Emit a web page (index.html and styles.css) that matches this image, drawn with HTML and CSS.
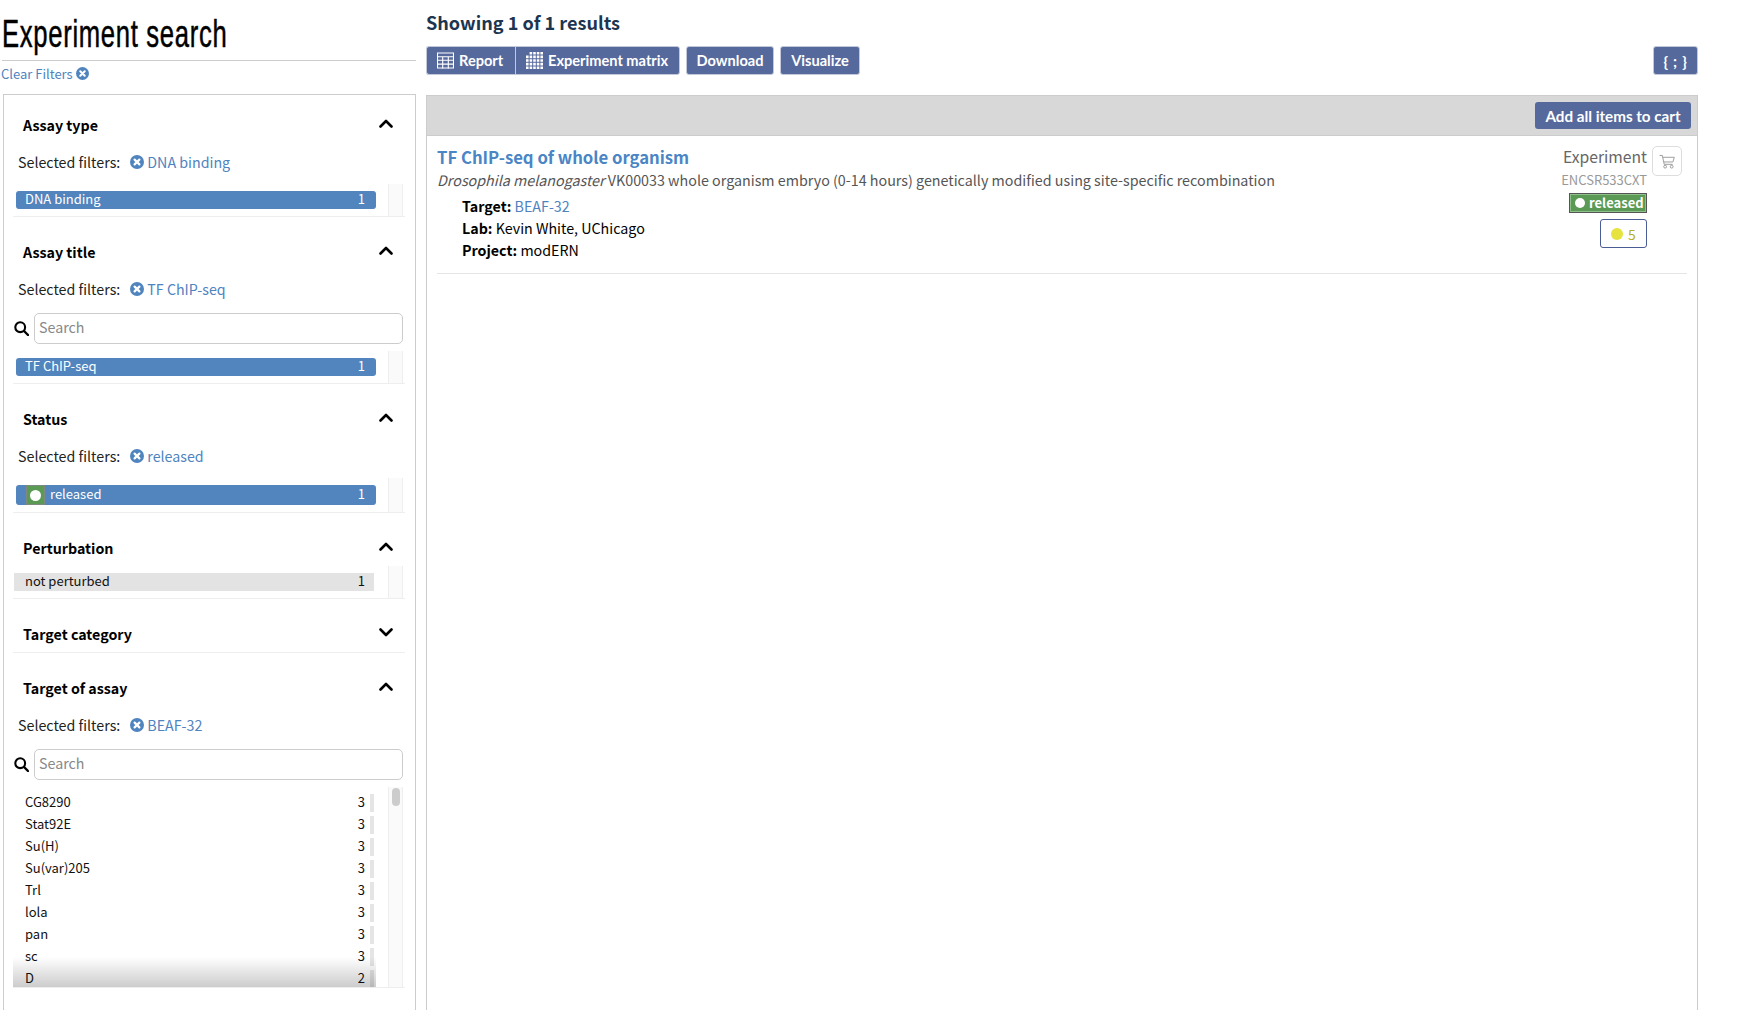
FILE: index.html
```html
<!DOCTYPE html>
<html lang="en">
<head>
<meta charset="utf-8">
<title>Experiment search</title>
<link rel="stylesheet" href="styles.css">
</head>
<body>
<svg class="defs" width="0" height="0" aria-hidden="true">
  <symbol id="x-circle" viewBox="0 0 14 14">
    <circle cx="7" cy="7" r="7" fill="#5084bf"/>
    <path d="M4.6 4.6l4.8 4.8M9.4 4.6l-4.8 4.8" stroke="#fff" stroke-width="2.2" stroke-linecap="round" fill="none"/>
  </symbol>
  <symbol id="up" viewBox="0 0 14 9">
    <path d="M1.5 7.5L7 2l5.5 5.5" stroke="#000" stroke-width="2.6" fill="none" stroke-linecap="round" stroke-linejoin="round"/>
  </symbol>
  <symbol id="down" viewBox="0 0 14 9">
    <path d="M1.5 1.5L7 7l5.5-5.5" stroke="#000" stroke-width="2.6" fill="none" stroke-linecap="round" stroke-linejoin="round"/>
  </symbol>
  <symbol id="search" viewBox="0 0 15 15">
    <circle cx="6.2" cy="6.2" r="4.9" stroke="#000" stroke-width="2.1" fill="none"/>
    <path d="M10 10l4 4" stroke="#000" stroke-width="2.4" stroke-linecap="round"/>
  </symbol>
</svg>
<div class="page">
  <aside class="sidebar">
    <h1 class="page-title"><span class="page-title-text">Experiment search</span></h1>
    <a class="clear-filters">Clear Filters <svg class="ico-x-small"><use href="#x-circle"/></svg></a>
    <div class="panel">

      <section class="facet first">
        <div class="facet-title"><span>Assay type</span><svg class="chev"><use href="#up"/></svg></div>
        <div class="selected"><span class="selected-label">Selected filters:</span><svg class="ico-x"><use href="#x-circle"/></svg><a class="link">DNA binding</a></div>
        <div class="terms spaced">
          <div class="term-col">
            <div class="term on"><span class="term-name">DNA binding</span><span class="term-count">1</span></div>
          </div>
          <div class="gutter"></div>
        </div>
      </section>

      <section class="facet">
        <div class="facet-title"><span>Assay title</span><svg class="chev"><use href="#up"/></svg></div>
        <div class="selected"><span class="selected-label">Selected filters:</span><svg class="ico-x"><use href="#x-circle"/></svg><a class="link">TF ChIP-seq</a></div>
        <div class="search"><svg class="ico-search"><use href="#search"/></svg><input class="search-input" type="text" placeholder="Search"></div>
        <div class="terms">
          <div class="term-col">
            <div class="term on"><span class="term-name">TF ChIP-seq</span><span class="term-count">1</span></div>
          </div>
          <div class="gutter"></div>
        </div>
      </section>

      <section class="facet">
        <div class="facet-title"><span>Status</span><svg class="chev"><use href="#up"/></svg></div>
        <div class="selected"><span class="selected-label">Selected filters:</span><svg class="ico-x"><use href="#x-circle"/></svg><a class="link">released</a></div>
        <div class="terms spaced">
          <div class="term-col">
            <div class="term on tall"><span class="term-status"><i></i></span><span class="term-name">released</span><span class="term-count">1</span></div>
          </div>
          <div class="gutter"></div>
        </div>
      </section>

      <section class="facet">
        <div class="facet-title"><span>Perturbation</span><svg class="chev"><use href="#up"/></svg></div>
        <div class="terms near">
          <div class="term-col">
            <div class="term full"><span class="term-name">not perturbed</span><span class="term-count">1</span></div>
          </div>
          <div class="gutter"></div>
        </div>
      </section>

      <section class="facet closed">
        <div class="facet-title"><span>Target category</span><svg class="chev"><use href="#down"/></svg></div>
      </section>

      <section class="facet">
        <div class="facet-title"><span>Target of assay</span><svg class="chev"><use href="#up"/></svg></div>
        <div class="selected"><span class="selected-label">Selected filters:</span><svg class="ico-x"><use href="#x-circle"/></svg><a class="link">BEAF-32</a></div>
        <div class="search"><svg class="ico-search"><use href="#search"/></svg><input class="search-input" type="text" placeholder="Search"></div>
        <div class="terms scroller">
          <div class="term-col">
            <div class="term"><span class="term-name">CG8290</span><span class="term-count">3</span><i class="term-fill"></i></div>
            <div class="term"><span class="term-name">Stat92E</span><span class="term-count">3</span><i class="term-fill"></i></div>
            <div class="term"><span class="term-name">Su(H)</span><span class="term-count">3</span><i class="term-fill"></i></div>
            <div class="term"><span class="term-name">Su(var)205</span><span class="term-count">3</span><i class="term-fill"></i></div>
            <div class="term"><span class="term-name">Trl</span><span class="term-count">3</span><i class="term-fill"></i></div>
            <div class="term"><span class="term-name">lola</span><span class="term-count">3</span><i class="term-fill"></i></div>
            <div class="term"><span class="term-name">pan</span><span class="term-count">3</span><i class="term-fill"></i></div>
            <div class="term"><span class="term-name">sc</span><span class="term-count">3</span><i class="term-fill"></i></div>
            <div class="term"><span class="term-name">D</span><span class="term-count">2</span><i class="term-fill"></i></div>
          </div>
          <div class="gutter"><div class="thumb"></div></div>
          <div class="fade"></div>
        </div>
      </section>

    </div>
  </aside>

  <main class="content">
    <h2 class="result-count">Showing 1 of 1 results</h2>
    <div class="toolbar">
      <div class="btn-group">
        <a class="btn">
          <svg class="btn-ico" viewBox="0 0 17 16" fill="none" stroke="#fff" stroke-width="1.1"><path d="M.5.5h16v15H.5z"/><path d="M0 4.2h17M0 7.8h17M0 11.6h17M5.7 4.2V16M11.3 4.2V16"/></svg>
          Report
        </a>
        <a class="btn">
          <svg class="btn-ico" viewBox="0 0 17 17" fill="#fff"><path d="M3.6 0h2.6v2.6H3.6zM7.2 0h2.6v2.6H7.2zM10.8 0h2.6v2.6h-2.6zM14.4 0H17v2.6h-2.6zM0 3.6h2.6v2.6H0zM3.6 3.6h2.6v2.6H3.6zM7.2 3.6h2.6v2.6H7.2zM10.8 3.6h2.6v2.6h-2.6zM14.4 3.6H17v2.6h-2.6zM0 7.2h2.6v2.6H0zM3.6 7.2h2.6v2.6H3.6zM7.2 7.2h2.6v2.6H7.2zM10.8 7.2h2.6v2.6h-2.6zM14.4 7.2H17v2.6h-2.6zM0 10.8h2.6v2.6H0zM3.6 10.8h2.6v2.6H3.6zM7.2 10.8h2.6v2.6H7.2zM10.8 10.8h2.6v2.6h-2.6zM14.4 10.8H17v2.6h-2.6zM0 14.4h2.6V17H0zM3.6 14.4h2.6V17H3.6zM7.2 14.4h2.6V17H7.2zM10.8 14.4h2.6V17h-2.6zM14.4 14.4H17V17h-2.6z"/></svg>
          Experiment matrix
        </a>
      </div>
      <a class="btn solo download">Download</a>
      <a class="btn solo visualize">Visualize</a>
      <a class="btn json">{ ; }</a>
    </div>

    <div class="results">
      <div class="results-head"><a class="btn cart-all">Add all items to cart</a></div>
      <article class="result">
        <div class="result-main">
          <a class="result-title">TF ChIP-seq of whole organism</a>
          <p class="result-desc"><em>Drosophila melanogaster</em> VK00033 whole organism embryo (0-14 hours) genetically modified using site-specific recombination</p>
          <dl class="result-props">
            <div><dt>Target:</dt> <dd><a class="link">BEAF-32</a></dd></div>
            <div><dt>Lab:</dt> <dd>Kevin White, UChicago</dd></div>
            <div><dt>Project:</dt> <dd>modERN</dd></div>
          </dl>
        </div>
        <div class="result-meta">
          <div class="meta-col">
            <div class="meta-type">Experiment</div>
            <div class="meta-acc">ENCSR533CXT</div>
            <div class="status-badge"><i></i>released</div>
            <div class="audit"><i></i>5</div>
          </div>
          <div class="cart-btn">
            <svg viewBox="0 0 17 16" width="16" height="15" fill="none" stroke="#999" stroke-width="1"><path d="M0.5 1.5h3l2 9.5h9"/><path d="M3.8 3.5h12.5l-1.5 5H5.2"/><circle cx="6.5" cy="13.5" r="1.5"/><circle cx="13.5" cy="13.5" r="1.5"/></svg>
          </div>
        </div>
      </article>
    </div>
  </main>
</div>
</body>
</html>
```
FILE: styles.css
```css
* { box-sizing: border-box; }
html, body { margin: 0; height: 100%; overflow: hidden; background: #fff; }
body { font-family: "Noto Sans CJK SC", "Noto Sans", sans-serif; font-size: 14.25px; color: #000; }
.defs { position: absolute; }
a { text-decoration: none; }
.link { color: #4f83bf; }

.page { display: flex; height: 1010px; }

/* sidebar */
.sidebar { width: 416px; padding-left: 2px; flex: none; display: flex; flex-direction: column; }
.page-title {
  margin: 0; flex: none; height: 61px; padding-top: 11px; border-bottom: 1px solid #ccc;
  font-family: "Liberation Sans", sans-serif;
  font-size: 38px; line-height: 46px; font-weight: 400; color: #000; white-space: nowrap;
}
.page-title-text { display: inline-block; letter-spacing: 1px; transform: scaleX(.675); transform-origin: 0 50%; -webkit-text-stroke: .5px #000; }
.clear-filters { display: flex; flex: none; align-items: center; gap: 3px; height: 25px; margin-left: -1px; font-size: 13px; color: #4f83bf; }
.ico-x-small { width: 13px; height: 13px; }
.panel { margin: 8px 0 0 1px; flex: none; height: 960px; border: 1px solid #ccc; padding: 15px 10px 0 9px; }

.facet { margin-top: 20px; border-bottom: 1px solid #eee; }
.facet.first { margin-top: 0; }
.facet.closed { padding-bottom: 3px; }
.facet-title { display: flex; justify-content: space-between; height: 30px; align-items: center; padding: 0 12px 0 10px; font-weight: 700; font-size: 14.25px; line-height: 24px; }
.chev { width: 14px; height: 9px; margin-top: -4px; }
.selected { display: flex; align-items: center; height: 24px; margin-top: 10px; padding-left: 5px; line-height: 24px; }
.selected-label { margin-right: 10px; color: #222; }
.ico-x { width: 14px; height: 14px; margin-right: 3px; }

.search { display: flex; align-items: center; gap: 5px; margin: 12px 2px 0 1px; }
.ico-search { width: 15px; height: 15px; flex: none; }
.search-input { flex: 1; min-width: 0; height: 31px; border: 1px solid #ccc; border-radius: 5px; padding: 0 4px 4px; font: inherit; outline: none; background: #fff; }
.search-input::placeholder { color: #888; opacity: 1; }

.terms { display: flex; margin-top: 7px; font-size: 13px; line-height: 16px; position: relative; }
.terms.spaced { margin-top: 10px; }
.terms.near { margin-top: 3px; }
.term-col { width: 363px; padding: 7px 0 7px 1px; display: flex; flex-direction: column; gap: 4px; }
.gutter { margin-left: 12px; width: 15px; background: #fafafa; border: solid #eee; border-width: 0 1px; position: relative; }
.term { display: flex; align-items: center; height: 18px; width: 360px; padding-left: 11px; color: #111; }
.term-name, .term-count { position: relative; top: -1px; }
.term-name { flex: 1; }
.term-fill { width: 4px; height: 18px; margin-left: 5px; background: #e5e5e5; }
.term.on { margin-left: 2px; padding: 0 11px 0 9px; background: #5284bd; color: #fff; border-radius: 3px; }
.term.tall { height: 20px; }
.term.tall .term-status { margin-left: 1px; }
.term.full { padding-right: 9px; background: #e3e3e3; }
.term-status { width: 19px; height: 20px; margin-right: 5px; background: #5a9a55; border: 1px solid #7d8a7d; display: flex; align-items: center; justify-content: center; }
.term-status i { width: 11px; height: 11px; border-radius: 50%; background: #fff; }

.scroller { height: 200px; overflow: hidden; }
.scroller .term-col { height: 200px; overflow: hidden; flex: none; }
.scroller .term { flex: none; }
.thumb { position: absolute; left: 3px; top: 1px; width: 8px; height: 18px; border-radius: 4px; background: #ccc; }
.fade { position: absolute; left: 0; bottom: 0; width: 363px; height: 30px; background: linear-gradient(to bottom, rgba(0,0,0,0), rgba(0,0,0,.2)); pointer-events: none; }

/* content */
.content { width: 1272px; margin-left: 10px; flex: none; display: flex; flex-direction: column; }
.result-count { margin: 0; flex: none; height: 46px; padding-top: 8px; font-size: 18.1px; line-height: 28px; font-weight: 700; color: #1c3550; }
.toolbar { display: flex; flex: none; height: 29px; gap: 6px; }
.btn-group { display: flex; }
.btn {
  display: flex; align-items: center; height: 29px; padding: 0 10px; gap: 5px;
  background: #56699c; border: 1px solid #c3c9d8; border-radius: 3px; color: #fff;
  font-family: "Lato", sans-serif; font-size: 14.6px; font-weight: 700; white-space: nowrap;
}
.btn-group .btn:first-child { border-radius: 3px 0 0 3px; border-right-width: 0; width: 89px; }
.btn-group .btn:last-child { border-radius: 0 3px 3px 0; width: 165px; }
.btn-ico { width: 17px; height: 17px; flex: none; }
.btn.solo { justify-content: center; padding: 0; }
.btn.download { width: 88px; }
.btn.visualize { width: 80px; }
.btn.json { margin-left: auto; width: 45px; justify-content: center; padding: 0; font-size: 15px; letter-spacing: .7px; }

.results { margin-top: 20px; flex: 1; border: 1px solid #ccc; border-bottom: 0; padding: 0; }
.results-head { height: 40px; background: #d8d8d8; border-bottom: 1px solid #ccc; display: flex; justify-content: flex-end; padding: 6px 6px 0 0; }
.btn.cart-all { height: 27px; width: 156px; justify-content: center; padding: 0; border: 0; font-size: 15.2px; }
.result { display: flex; justify-content: space-between; margin: 0 10px 0 10px; height: 138px; border-bottom: 1px solid #e5e5e5; }
.result-main { padding-top: 9px; }
.result-title { display: block; font-size: 16.7px; line-height: 24px; font-weight: 700; color: #4a85c5; }
.result-desc { margin: 0; font-size: 14.3px; line-height: 22px; color: #555; }
.result-props { margin: 4px 0 0 25px; line-height: 22px; }
.result-props div { display: block; }
.result-props dt { display: inline; font-weight: 700; }
.result-props dd { display: inline; margin: 0; }

.result-meta { display: flex; align-items: flex-start; gap: 5px; padding: 9px 5px 0 0; }
.meta-col { display: flex; flex-direction: column; align-items: flex-end; }
.meta-type { font-size: 15.7px; line-height: 24px; color: #666; }
.meta-acc { font-size: 13px; line-height: 22px; color: #999; }
.status-badge { display: flex; align-items: center; gap: 4px; width: 78px; height: 20px; margin-top: 2px; padding-left: 5px; background: #5a9a55; border: 1px solid #555; box-shadow: inset 0 0 0 1px #8fbf8a; color: #fff; font-size: 13px; font-weight: 700; line-height: 18px; }
.status-badge i { width: 10px; height: 10px; border-radius: 50%; background: #fff; }
.audit { display: flex; align-items: center; justify-content: center; gap: 5px; width: 47px; height: 29px; margin-top: 6px; border: 1px solid #4a5d94; border-radius: 3px; color: #b7ae2a; font-size: 14px; }
.audit i { width: 12px; height: 12px; border-radius: 50%; background: #e6e23f; }
.cart-btn { width: 30px; height: 30px; margin-top: 1px; border: 1px solid #ddd; border-radius: 5px; display: flex; align-items: center; justify-content: center; }
```
